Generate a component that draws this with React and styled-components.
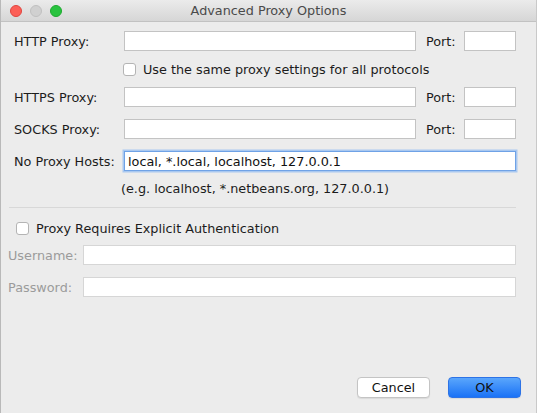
import React from 'react';
import styled, { createGlobalStyle } from 'styled-components';

const GlobalStyle = createGlobalStyle`
    html, body {
        margin: 0;
        padding: 0;
        background: #ececec;
    }
    body {
        font-family: 'DejaVu Sans', 'Liberation Sans', sans-serif;
        font-size: 12.8px;
        color: #1c1c1c;
    }
`;

const Window = styled.div`
    width: 537px;
    height: 413px;
    box-sizing: border-box;
    display: flex;
    flex-direction: column;
    background: #ececec;
    border-left: 1px solid #b9b9b9;
    border-right: 1px solid #c9c9c9;
`;

const TitleBar = styled.div`
    height: 22px;
    box-sizing: border-box;
    display: flex;
    align-items: center;
    position: relative;
    background: linear-gradient(#ebebeb, #d6d6d6);
    border-bottom: 1px solid #c2c2c2;
`;

const Lights = styled.div`
    display: flex;
    gap: 8px;
    padding-left: 9px;
`;

const Light = styled.span`
    width: 12px;
    height: 12px;
    box-sizing: border-box;
    border-radius: 50%;
    background: ${(p) => p.color};
    border: 1px solid ${(p) => p.edge};
`;

const Title = styled.div`
    position: absolute;
    left: 0;
    right: 0;
    text-align: center;
    color: #4a4a4a;
    font-size: 12.8px;
`;

const Content = styled.div`
    flex: 1;
    display: flex;
    flex-direction: column;
    padding: 9px 20px 0 7px;
`;

const ProxySection = styled.div`
    padding-left: 6px;
    display: flex;
    flex-direction: column;
`;

const Row = styled.div`
    display: flex;
    align-items: center;
    height: 20px;
    margin-top: ${(p) => p.gap || 0}px;
`;

const Label = styled.label`
    width: ${(p) => p.width}px;
    flex-shrink: 0;
    white-space: nowrap;
    color: ${(p) => (p.disabled ? '#9b9b9b' : '#1c1c1c')};
`;

const PortLabel = styled.label`
    width: 38px;
    margin-left: 10px;
`;

const Field = styled.div`
    box-sizing: border-box;
    height: 20px;
    width: ${(p) => (p.width ? `${p.width}px` : 'auto')};
    flex: ${(p) => (p.width ? 'none' : 1)};
    background: #fff;
    border: 1px solid ${(p) => (p.focused ? '#6fa2e6' : p.disabled ? '#d6d6d6' : '#c3c3c3')};
    box-shadow: ${(p) => (p.focused ? '0 0 0 1.5px #a9c8f0' : 'none')};
    padding: 0 3px;
    display: flex;
    align-items: center;
    color: #111;
    white-space: nowrap;
`;

const CheckRow = styled.label`
    display: flex;
    align-items: center;
    gap: 7px;
    height: 20px;
    margin-left: ${(p) => p.indent}px;
    margin-top: ${(p) => p.gap}px;
`;

const Box = styled.span`
    width: 13px;
    height: 13px;
    box-sizing: border-box;
    border: 1px solid #b4b4b4;
    border-radius: 3px;
    background: #fff;
`;

const Hint = styled.div`
    margin-left: 107px;
    margin-top: 10px;
    height: 16px;
    line-height: 16px;
`;

const Separator = styled.hr`
    border: 0;
    border-top: 1px solid #d8d8d8;
    margin: 10px 0 0 1px;
`;

const AuthSection = styled.div`
    display: flex;
    flex-direction: column;
`;

const Footer = styled.div`
    margin-top: auto;
    display: flex;
    justify-content: flex-end;
    gap: 18px;
    padding: 0 15px 15px 0;
`;

const Button = styled.button`
    box-sizing: border-box;
    width: ${(p) => p.width}px;
    height: 21px;
    border-radius: 4px;
    font-family: inherit;
    font-size: 12.8px;
    color: #111;
    padding: 0;
    border: 1px solid ${(p) => (p.primary ? '#2d73e6' : '#c4c4c4')};
    background: ${(p) => (p.primary ? 'linear-gradient(#5aa6fc, #1a72f6)' : '#fff')};
    box-shadow: 0 1px 1px rgba(0, 0, 0, 0.08);
`;

const ProxyRow = ({ label, gap }) => (
    <Row gap={gap}>
        <Label width={110}>{label}</Label>
        <Field width={292} />
        <PortLabel>Port:</PortLabel>
        <Field width={52} />
    </Row>
);

const App = () => (
    <>
        <GlobalStyle />
        <Window>
            <TitleBar>
                <Lights>
                    <Light color="#fc5f57" edge="#e0443e" />
                    <Light color="#d0d0d0" edge="#c0c0c0" />
                    <Light color="#29c33f" edge="#1daa2e" />
                </Lights>
                <Title>Advanced Proxy Options</Title>
            </TitleBar>
            <Content>
                <ProxySection>
                    <ProxyRow label="HTTP Proxy:" />
                    <CheckRow indent={109} gap={8}>
                        <Box />
                        Use the same proxy settings for all protocols
                    </CheckRow>
                    <ProxyRow label="HTTPS Proxy:" gap={8} />
                    <ProxyRow label="SOCKS Proxy:" gap={12} />
                    <Row gap={12}>
                        <Label width={110}>No Proxy Hosts:</Label>
                        <Field focused>local, *.local, localhost, 127.0.0.1</Field>
                    </Row>
                    <Hint>(e.g. localhost, *.netbeans.org, 127.0.0.1)</Hint>
                </ProxySection>
                <Separator />
                <AuthSection>
                    <CheckRow indent={8} gap={10}>
                        <Box />
                        Proxy Requires Explicit Authentication
                    </CheckRow>
                    <Row gap={7}>
                        <Label width={75} disabled>Username:</Label>
                        <Field disabled />
                    </Row>
                    <Row gap={12}>
                        <Label width={75} disabled>Password:</Label>
                        <Field disabled />
                    </Row>
                </AuthSection>
            </Content>
            <Footer>
                <Button width={73}>Cancel</Button>
                <Button width={73} primary>OK</Button>
            </Footer>
        </Window>
    </>
);

export default App;
